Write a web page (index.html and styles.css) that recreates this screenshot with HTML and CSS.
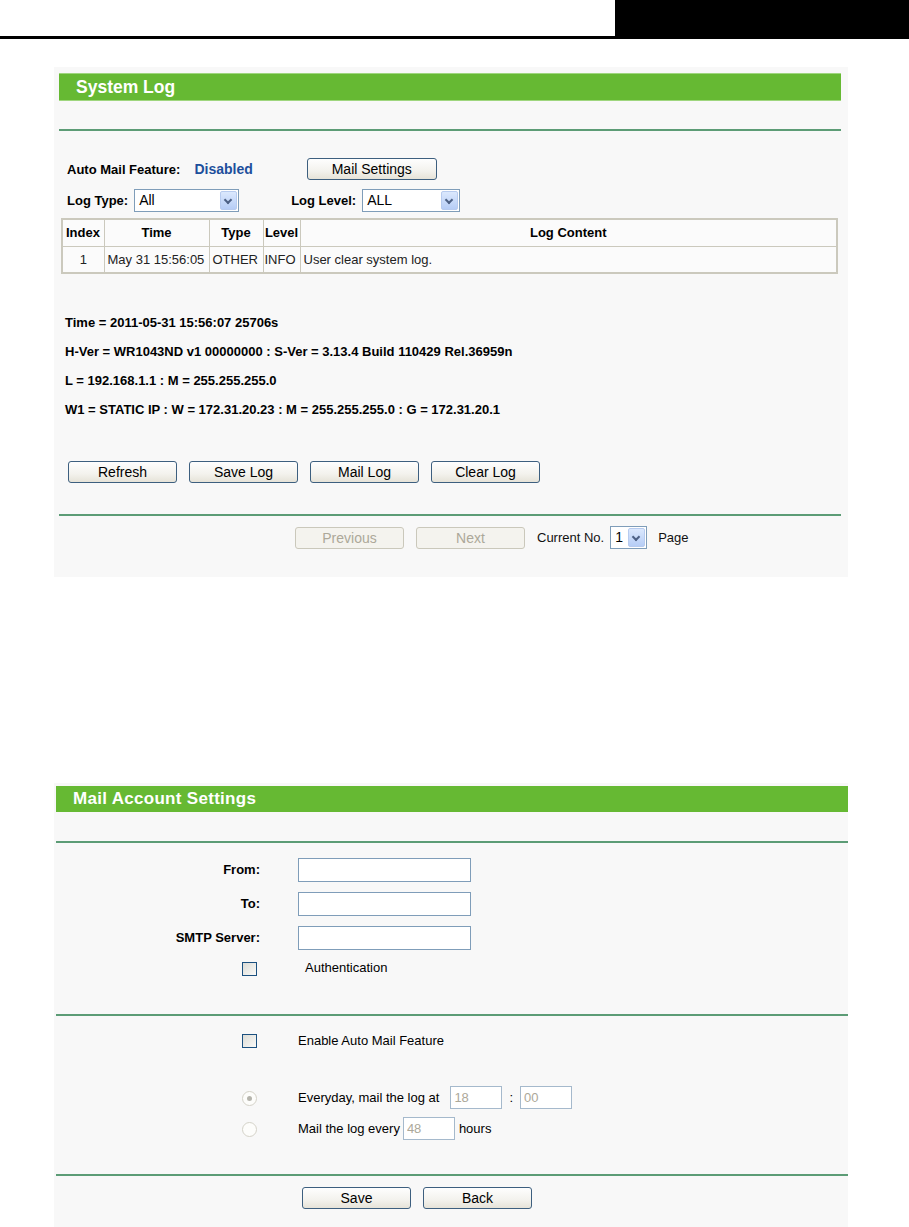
FILE: index.html
```html
<!DOCTYPE html>
<html lang="en">
<head>
    <meta charset="UTF-8">
    <title>System Log</title>
    <link rel="stylesheet" href="styles.css">
</head>
<body>
    <div class="page-head">
        <div class="head-rule"></div>
        <div class="head-box"></div>
    </div>

    <div class="panel log-panel">
        <div class="panel-title">System Log</div>
        <div class="rule first-rule"></div>

        <div class="log-body">
            <div class="row mail-row">
                <span class="label-b">Auto Mail Feature:</span>
                <span class="state">Disabled</span>
                <button class="btn mail-settings">Mail Settings</button>
            </div>
            <div class="row filter-row">
                <span class="label-b">Log Type:</span>
                <div class="select type-select"><span class="val">All</span><span class="arrow"></span></div>
                <span class="label-b level-label">Log Level:</span>
                <div class="select level-select"><span class="val">ALL</span><span class="arrow"></span></div>
            </div>
        </div>

        <table class="log-table">
            <tr>
                <th class="c-index">Index</th>
                <th class="c-time">Time</th>
                <th class="c-type">Type</th>
                <th class="c-level">Level</th>
                <th>Log Content</th>
            </tr>
            <tr>
                <td class="center">1</td>
                <td>May 31 15:56:05</td>
                <td>OTHER</td>
                <td class="c-level">INFO</td>
                <td>User clear system log.</td>
            </tr>
        </table>

        <div class="sys-info">
            <div>Time = 2011-05-31 15:56:07 25706s</div>
            <div>H-Ver = WR1043ND v1 00000000 : S-Ver = 3.13.4 Build 110429 Rel.36959n</div>
            <div>L = 192.168.1.1 : M = 255.255.255.0</div>
            <div>W1 = STATIC IP : W = 172.31.20.23 : M = 255.255.255.0 : G = 172.31.20.1</div>
        </div>

        <div class="btn-row log-actions">
            <button class="btn">Refresh</button>
            <button class="btn">Save Log</button>
            <button class="btn">Mail Log</button>
            <button class="btn">Clear Log</button>
        </div>

        <div class="rule pager-rule"></div>

        <div class="pager">
            <button class="btn" disabled>Previous</button>
            <button class="btn" disabled>Next</button>
            <span class="pager-text">Current No.</span>
            <div class="select page-select"><span class="val">1</span><span class="arrow"></span></div>
            <span class="pager-text page-word">Page</span>
        </div>
    </div>

    <div class="panel mail-panel">
        <div class="panel-title mail-title">Mail Account Settings</div>
        <div class="rule mail-rule"></div>

        <div class="form account-form">
            <label class="f-label">From:</label>
            <div class="f-field"><input class="text-in" type="text"></div>
            <label class="f-label">To:</label>
            <div class="f-field"><input class="text-in" type="text"></div>
            <label class="f-label">SMTP Server:</label>
            <div class="f-field"><input class="text-in" type="text"></div>
            <div class="f-label short"><span class="check"></span></div>
            <div class="f-field short auth-text">Authentication</div>
        </div>

        <div class="rule mail-rule section-rule"></div>

        <div class="form schedule-form">
            <div class="f-label"><span class="check"></span></div>
            <div class="f-field">Enable Auto Mail Feature</div>
        </div>
        <div class="form radio-form">
            <div class="f-label"><span class="radio on"></span></div>
            <div class="f-field">
                <span>Everyday, mail the log at</span>
                <input class="small-in hour-in" type="text" value="18" disabled>
                <span class="colon">:</span>
                <input class="small-in" type="text" value="00" disabled>
            </div>
            <div class="f-label"><span class="radio"></span></div>
            <div class="f-field">
                <span>Mail the log every</span>
                <input class="small-in every-in" type="text" value="48" disabled>
                <span>hours</span>
            </div>
        </div>

        <div class="rule mail-rule bottom-rule"></div>

        <div class="btn-row mail-actions">
            <button class="btn">Save</button>
            <button class="btn">Back</button>
        </div>
    </div>
</body>
</html>
```

FILE: styles.css
```css
* {
    margin: 0;
    padding: 0;
    box-sizing: border-box;
}

body {
    font-family: 'Liberation Sans', Arial, sans-serif;
    font-size: 13px;
    color: #000;
    background: #fff;
    overflow: hidden;
}

/* page header */
.page-head {
    display: flex;
    height: 39px;
}

.head-rule {
    flex: 1;
    border-bottom: 3px solid #000;
}

.head-box {
    width: 294px;
    background: #000;
}

/* panels */
.panel {
    margin-left: 54px;
    width: 794px;
    background: #f8f8f8;
}

.log-panel {
    margin-top: 28px;
    padding: 6px 7px 28px 5px;
}

.mail-panel {
    margin-top: 206px;
    padding: 3px 0 20px 2px;
}

.panel-title {
    height: 28px;
    line-height: 27px;
    padding-left: 17px;
    background: #66b933;
    border-top: 1px solid #9fd67e;
    border-bottom: 1px solid #9fd67e;
    color: #fff;
    font-weight: bold;
    font-size: 17.5px;
}

.mail-title {
    height: 26px;
    line-height: 25px;
    padding-left: 17px;
    border: none;
    font-size: 17px;
    letter-spacing: 0.3px;
}

.rule {
    height: 2px;
    background: #5c9c76;
}

.first-rule {
    margin-top: 28px;
}

/* buttons */
.btn {
    width: 109px;
    height: 22px;
    font-family: 'Liberation Sans', Arial, sans-serif;
    font-size: 14px;
    color: #000;
    background: linear-gradient(#fefefe, #f3f2ed 60%, #e6e3d8);
    border: 1px solid #3d5f7f;
    border-radius: 3px;
}

.btn:disabled {
    color: #aca899;
    background: #f4f3ee;
    border-color: #cac8bb;
}

.btn-row {
    display: flex;
    gap: 12px;
}

/* log panel */
.log-body {
    padding-left: 8px;
}

.row {
    display: flex;
    align-items: center;
}

.mail-row {
    margin-top: 27px;
    height: 22px;
}

.label-b {
    font-weight: bold;
}

.state {
    margin-left: 14px;
    color: #1d4f9c;
    font-weight: bold;
    font-size: 14px;
}

.mail-row .mail-settings {
    margin-left: 54px;
    width: 130px;
}

.filter-row {
    margin-top: 9px;
    height: 23px;
}

.select {
    display: flex;
    height: 23px;
    background: #fff;
    border: 1px solid #7f9db9;
    font-size: 14px;
}

.select .val {
    flex: 1;
    padding-left: 4px;
    line-height: 21px;
}

.select .arrow {
    position: relative;
    width: 17px;
    margin: 1px;
    background: linear-gradient(#dbe8fd, #b6cdf6);
    border: 1px solid #b7cbef;
    border-radius: 2px;
}

.select .arrow::after {
    content: "";
    position: absolute;
    left: 4px;
    top: 5px;
    width: 4px;
    height: 4px;
    border-right: 2px solid #4d6185;
    border-bottom: 2px solid #4d6185;
    transform: rotate(45deg);
}

.type-select {
    margin-left: 6px;
    width: 105px;
}

.level-label {
    margin-left: 52px;
}

.level-select {
    margin-left: 6px;
    width: 98px;
}

.log-table {
    margin: 6px 0 0 2px;
    width: 777px;
    border-collapse: collapse;
    border: 2px solid #cbc9bd;
    background: #fbfbfb;
}

.log-table th,
.log-table td {
    border: 1px solid #cbc9bd;
    height: 27px;
    padding: 0 3px;
    white-space: nowrap;
}

.log-table th {
    font-weight: bold;
    text-align: center;
}

.log-table th.c-index {
    text-align: left;
}

.log-table td {
    color: #222;
}

.c-index { width: 42px; }
.c-time { width: 105px; }
.c-type { width: 54px; }

.log-table .c-level {
    width: 37px;
    padding: 0 1px;
}

.log-table td.center {
    text-align: center;
}

.sys-info {
    margin-top: 34px;
    padding-left: 6px;
    font-weight: bold;
    line-height: 29px;
}

.log-actions {
    margin-top: 37px;
    padding-left: 9px;
}

.pager-rule {
    margin-top: 31px;
}

.pager {
    display: flex;
    align-items: center;
    margin-top: 10px;
    padding-left: 236px;
    gap: 12px;
}

.pager-text {
    color: #111;
}

.page-select {
    margin-left: -6px;
    width: 37px;
}

.page-word {
    margin-left: -1px;
}

/* mail panel */
.mail-rule {
    margin-top: 29px;
}

.form {
    display: grid;
    grid-template-columns: 204px 1fr;
    column-gap: 38px;
    align-items: center;
}

.account-form {
    margin-top: 15px;
    row-gap: 10px;
}

.f-label {
    text-align: right;
    font-weight: bold;
    height: 24px;
    line-height: 24px;
}

.f-field {
    display: flex;
    align-items: center;
    gap: 4px;
}

.account-form .short {
    height: 16px;
    line-height: 16px;
}

.text-in {
    width: 173px;
    height: 24px;
    background: #fff;
    border: 1px solid #7f9db9;
}

.check {
    display: inline-block;
    vertical-align: middle;
    width: 15px;
    height: 14px;
    margin-right: 3px;
    border: 1px solid #1c5180;
    background: linear-gradient(135deg, #dcdcd6, #fafaf8);
}

.radio {
    display: inline-block;
    vertical-align: middle;
    position: relative;
    width: 15px;
    height: 15px;
    margin-right: 3px;
    border: 1px solid #d4d2c8;
    border-radius: 50%;
    background: #fdfdfb;
}

.radio.on::after {
    content: "";
    position: absolute;
    left: 4px;
    top: 4px;
    width: 5px;
    height: 5px;
    border-radius: 50%;
    background: #b5b4ac;
}

.auth-text {
    padding-left: 7px;
}

.section-rule {
    margin-top: 38px;
}

.schedule-form {
    margin-top: 12px;
}

.radio-form {
    margin-top: 34px;
    row-gap: 8px;
}

.radio-form .f-label,
.radio-form .f-field {
    height: 23px;
}

.small-in {
    width: 52px;
    height: 23px;
    padding-left: 3px;
    font-family: 'Liberation Sans', Arial, sans-serif;
    font-size: 13px;
    color: #aca899;
    background: #fff;
    border: 1px solid #a5b9cc;
}

.hour-in {
    margin-left: 7px;
}

.colon {
    margin: 0 3px;
}

.every-in {
    margin-left: -1px;
}

.bottom-rule {
    margin-top: 34px;
}

.mail-actions {
    margin-top: 11px;
    padding-left: 246px;
    gap: 12px;
}
```
